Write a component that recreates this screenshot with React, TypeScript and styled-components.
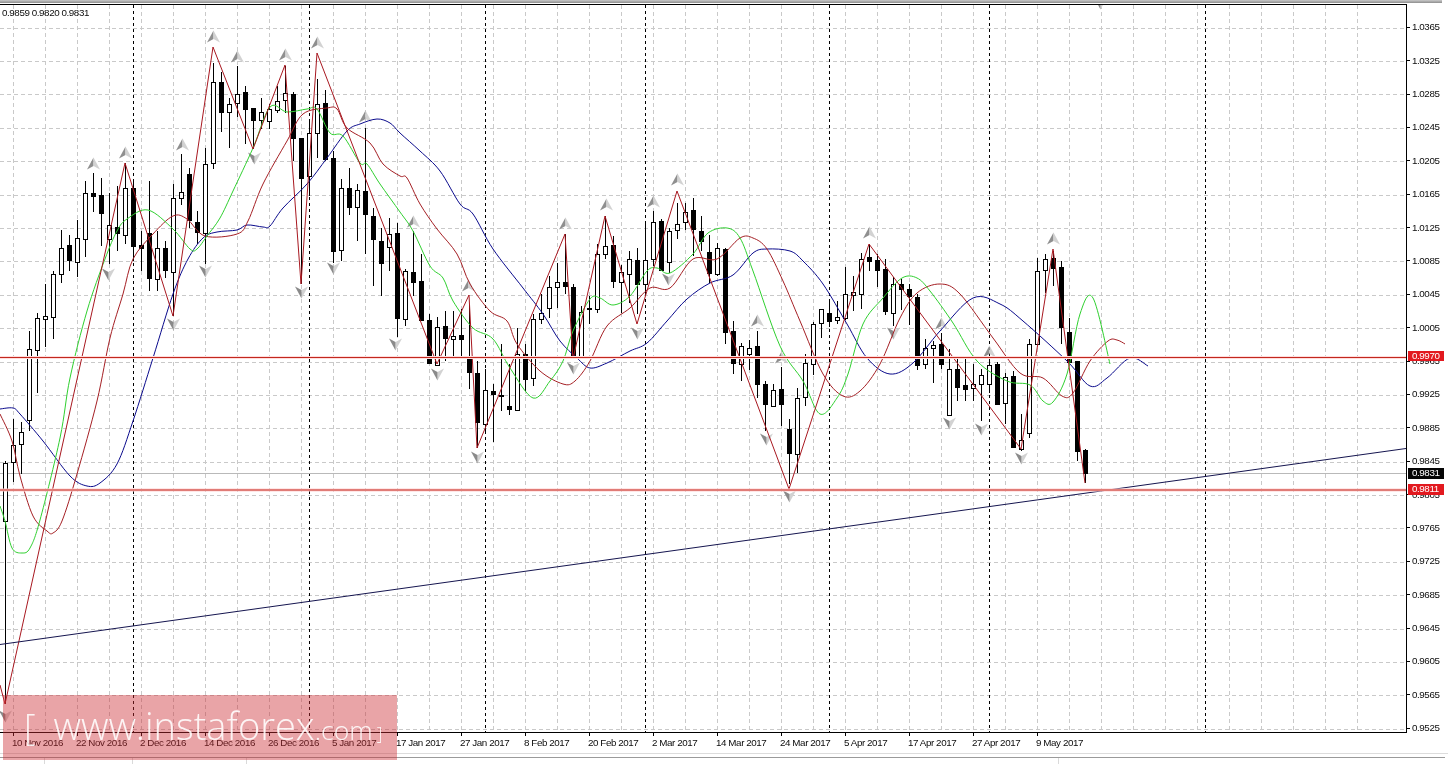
import React from "react";
import styled, { createGlobalStyle } from "styled-components";

const GlobalStyle = createGlobalStyle`
  html, body { margin: 0; padding: 0; background: #fff; overflow: hidden; }
  #root { width: 1448px; height: 764px; }
`;

const FONT = `"Liberation Sans", Arial, sans-serif`;

const Page = styled.div`
  position: relative;
  width: 1448px;
  height: 764px;
  display: flex;
  flex-direction: column;
  background: #fff;
  overflow: hidden;
  font-family: ${FONT};
  font-size: 9.8px;
  letter-spacing: -0.42px;
  color: #0c0c0c;
  filter: blur(0.22px);
`;
const TopBand = styled.div`
  height: 3px;
  margin-right: 6px;
  background: linear-gradient(#c9c9c9, #8e8e8e);
  flex: none;
  margin-bottom: 1px;
`;
const ChartRow = styled.div`
  display: flex;
  height: 729px;
  flex: none;
`;
const ChartArea = styled.div`
  position: relative;
  width: 1406px;
  height: 727px;
  flex: none;
  border-top: 1px solid #000;
  border-right: 1px solid #000;
  border-bottom: 1px solid #000;
`;
const ChartSvg = styled.svg`
  display: block;
  width: 1406px;
  height: 727px;
`;
const Legend = styled.div`
  position: absolute;
  left: 2px;
  top: 2px;
  line-height: 12px;
  white-space: pre;
`;
const PriceAxis = styled.div`
  position: relative;
  flex: 1;
  display: flex;
  flex-direction: column;
  padding-top: 6.1px;
`;
const PriceRow = styled.div`
  position: relative;
  height: 33.38px;
  flex: none;
  display: flex;
  align-items: center;
  padding-left: 5px;
  &::before {
    content: "";
    position: absolute;
    left: 0;
    top: 50%;
    width: 3px;
    height: 1px;
    background: #000;
  }
`;
const PriceTag = styled.div<{ $top: number; $bg: string }>`
  position: absolute;
  left: 1px;
  top: ${(p) => p.$top}px;
  width: 36px;
  height: 10.5px;
  line-height: 10.5px;
  padding-left: 4px;
  box-sizing: border-box;
  background: ${(p) => p.$bg};
  color: #fff;
`;
const DateAxis = styled.div`
  display: flex;
  height: 20px;
  flex: none;
  padding-left: 12px;
`;
const DateCell = styled.div`
  position: relative;
  width: 64px;
  flex: none;
  padding-top: 4px;
  line-height: 12px;
  white-space: nowrap;
  &::before {
    content: "";
    position: absolute;
    left: 1px;
    top: -1px;
    width: 1px;
    height: 4px;
    background: #000;
  }
`;
const Divider = styled.div`
  height: 1px;
  background: #dcdcdc;
  flex: none;
`;
const TabStrip = styled.div`
  margin-top: 3px;
  flex: 1;
  display: flex;
  margin-right: 3px;
  border-top: 1px solid #9a9a9a;
`;
const Tab = styled.div<{ $w: number }>`
  width: ${(p) => p.$w}px;
  flex: none;
  border-right: 1px solid #dadada;
  box-sizing: border-box;
`;
const Watermark = styled.div`
  position: absolute;
  left: 3px;
  top: 695px;
  width: 394px;
  height: 65px;
  background: rgba(205, 45, 50, 0.43);
  color: rgba(255, 255, 255, 0.88);
  font-family: "Open Sans", "Liberation Sans", sans-serif;
  font-weight: 300;
  letter-spacing: 0;
  display: flex;
  align-items: baseline;
  padding: 3px 0 0 21px;
  box-sizing: border-box;
  white-space: nowrap;
`;
const Bracket = styled.span<{ $size: number }>`
  font-size: ${(p) => p.$size}px;
  line-height: 54px;
`;
const Domain = styled.span`
  margin-left: 18px;
  font-size: 38px;
  line-height: 54px;
`;
const Suffix = styled.span`
  font-size: 26.5px;
  line-height: 54px;
  margin-right: 4px;
`;

type C = [number, number, number, number, number];
const CANDLES: C[] = [
  [460,703,462,520,0],[418,481,444,461,0],[421,473,431,443,0],[330,430,348,419,0],[312,392,317,349,0],[283,346,315,318,0],[270,338,273,316,0],[229,282,247,273,0],
  [234,270,244,260,1],[219,276,237,261,0],[180,256,192,238,0],[172,211,192,196,1],[177,245,194,213,1],[192,263,224,238,0],[185,250,226,233,1],[162,243,187,234,0],
  [178,260,187,246,1],[230,270,244,248,1],[180,290,232,278,1],[230,290,247,278,0],[240,277,247,270,1],[183,315,197,271,0],[153,204,191,197,0],[167,227,173,220,1],
  [210,243,221,232,1],[147,263,163,232,0],[62,168,81,162,0],[71,131,81,112,1],[97,147,103,111,0],[65,116,93,102,0],[85,143,91,109,1],[107,148,107,120,1],
  [97,128,111,119,0],[103,128,108,120,0],[85,112,100,109,0],[65,112,92,99,0],[91,160,93,138,1],[137,283,137,178,1],[120,195,132,175,0],[78,157,103,132,0],
  [89,160,102,159,1],[150,262,157,251,1],[178,260,187,249,0],[167,214,187,207,1],[183,240,189,206,0],[127,253,190,214,1],[207,285,215,239,1],[227,295,240,263,1],
  [217,270,233,246,0],[222,336,232,318,1],[268,325,270,318,0],[230,295,271,282,1],[253,320,280,320,1],[313,363,319,363,1],[316,365,326,364,0],[310,360,325,338,1],
  [310,358,335,338,0],[308,357,334,339,1],[303,388,357,372,1],[360,447,372,422,1],[368,433,389,423,0],[383,441,390,394,1],[343,410,394,396,1],[363,414,405,409,1],
  [327,410,353,409,0],[343,390,353,379,1],[313,385,318,377,0],[293,323,312,318,0],[275,317,286,307,0],[262,307,281,286,0],[233,293,281,286,1],[283,358,286,357,1],
  [305,358,311,357,0],[295,323,307,309,1],[243,312,253,308,0],[215,258,245,253,0],[235,287,244,281,1],[264,312,271,281,0],[250,302,258,273,0],[247,313,259,284,1],
  [223,293,259,283,0],[210,265,221,258,0],[218,270,220,270,1],[227,272,230,261,0],[202,238,223,229,0],[202,229,211,221,0],[197,255,209,229,1],[215,250,230,241,1],
  [234,282,251,273,1],[242,275,247,273,0],[247,343,248,332,1],[320,373,330,363,1],[342,380,345,363,0],[339,369,347,353,0],[330,397,345,384,1],[380,430,383,404,1],
  [383,405,389,405,0],[366,425,388,404,1],[418,483,428,453,1],[387,472,397,453,0],[353,405,362,396,0],[321,374,323,363,0],[308,337,308,322,0],[298,326,312,321,1],
  [300,323,316,319,0],[266,319,293,317,0],[275,310,291,294,0],[252,308,258,293,0],[243,270,256,261,1],[253,286,259,270,1],[258,314,268,311,1],[276,325,283,312,0],
  [278,309,283,289,1],[283,324,288,296,1],[293,369,296,365,1],[338,368,347,363,0],[340,382,344,347,0],[332,368,343,364,1],[348,415,368,414,0],[358,400,368,387,1],
  [358,400,384,389,1],[363,400,383,387,0],[368,420,374,383,0],[357,392,364,383,0],[361,404,363,404,1],[372,423,376,402,0],[370,447,375,447,1],[413,450,439,448,0],
  [338,437,343,432,0],[257,343,270,343,0],[253,292,258,269,0],[250,285,257,268,1],[260,343,266,327,1],[317,362,331,362,1],[360,460,360,451,1],[448,482,449,473,1],
];

const pts = (a: number[][]) => a.map((p) => `${p[0]},${p[1]}`).join(" ");

// Catmull-Rom spline through the sampled points of a moving average
const spline = (a: number[][]) => {
  let d = `M${a[0][0]},${a[0][1]}`;
  for (let i = 0; i < a.length - 1; i++) {
    const p0 = a[Math.max(i - 1, 0)];
    const p1 = a[i];
    const p2 = a[i + 1];
    const p3 = a[Math.min(i + 2, a.length - 1)];
    const c1x = p1[0] + (p2[0] - p0[0]) / 6;
    const c1y = p1[1] + (p2[1] - p0[1]) / 6;
    const c2x = p2[0] - (p3[0] - p1[0]) / 6;
    const c2y = p2[1] - (p3[1] - p1[1]) / 6;
    d += ` C${c1x.toFixed(1)},${c1y.toFixed(1)} ${c2x.toFixed(1)},${c2y.toFixed(1)} ${p2[0]},${p2[1]}`;
  }
  return d;
};

const ZIGZAG = [[0,684],[5,703],[125,162],[173,315],[213,46],[253,148],[285,64],[301,283],[317,52],[437,363],[469,294],[477,447],[565,233],[573,358],[605,215],[637,323],[677,190],[789,488],[869,243],[1021,448],[1053,248],[1085,482]];
const RED = [[0,413],[12,440],[20,475],[33,515],[47,530],[53,532],[62,520],[77,473],[97,400],[110,337],[123,293],[133,258],[153,233],[173,215],[187,218],[205,235],[237,233],[248,220],[263,183],[287,140],[303,113],[327,107],[337,108],[347,127],[370,142],[383,163],[400,175],[407,177],[420,203],[437,228],[457,253],[470,283],[490,310],[507,320],[517,343],[540,370],[563,383],[575,380],[590,360],[607,325],[630,307],[650,287],[670,287],[693,258],[717,258],[740,237],[753,237],[767,248],[783,280],[800,320],[823,373],[843,395],[860,390],[880,363],[900,317],[917,292],[940,283],[960,293],[993,337],[1020,372],[1043,377],[1062,395],[1073,392],[1090,360],[1108,340],[1117,339],[1125,343]];
const GREEN = [[0,505],[5,520],[12,547],[22,552],[30,547],[40,519],[60,437],[70,377],[87,310],[105,258],[117,230],[127,218],[148,209],[173,228],[190,248],[197,248],[207,235],[220,217],[233,190],[253,147],[270,106],[287,111],[307,108],[317,108],[330,132],[343,135],[360,162],[367,163],[380,183],[400,211],[413,230],[430,265],[443,277],[453,300],[473,327],[493,338],[510,367],[533,397],[550,380],[563,360],[573,330],[590,298],[600,297],[613,304],[630,295],[647,270],[657,267],[670,272],[693,253],[708,232],[727,227],[740,237],[753,270],[780,345],[803,380],[820,413],[837,397],[848,373],[863,323],[883,297],[902,277],[917,277],[930,290],[953,322],[977,360],[1007,380],[1030,384],[1043,400],[1053,401],[1067,373],[1080,313],[1093,297],[1110,363]];
const BLUE = [[0,408],[13,407],[20,413],[43,440],[70,475],[87,485],[100,482],[117,463],[133,420],[153,357],[173,293],[188,258],[203,237],[217,231],[237,229],[247,224],[263,226],[270,225],[283,207],[307,183],[327,157],[347,130],[360,123],[377,118],[390,122],[400,132],[420,150],[440,170],[460,203],[473,213],[493,248],[523,287],[543,313],[560,340],[577,357],[590,367],[607,362],[630,350],[647,342],[667,320],[687,298],[710,282],[733,274],[753,252],[767,248],[790,250],[803,260],[823,283],[847,323],[867,357],[890,373],[913,362],[940,330],[973,297],[1000,303],[1023,320],[1067,360],[1090,385],[1107,377],[1130,357],[1148,365]];

const UP = [[93,163],[125,152],[182,144],[213,36],[237,56],[285,54],[317,42],[365,116],[413,221],[468,285],[565,223],[606,204],[653,201],[677,179],[757,320],[781,357],[869,232],[941,323],[989,351],[1053,238]];
const DOWN = [[5,715],[108,273],[173,323],[205,270],[254,157],[301,291],[333,267],[395,343],[437,373],[477,456],[573,367],[637,332],[668,278],[766,438],[789,495],[893,332],[949,422],[981,428],[1021,457],[1100,2]];

const PRICES = ["1.0365","1.0325","1.0285","1.0245","1.0205","1.0165","1.0125","1.0085","1.0045","1.0005","0.9965","0.9925","0.9885","0.9845","0.9805","0.9765","0.9725","0.9685","0.9645","0.9605","0.9565","0.9525"];
const DATES = ["10 Nov 2016","22 Nov 2016","2 Dec 2016","14 Dec 2016","26 Dec 2016","5 Jan 2017","17 Jan 2017","27 Jan 2017","8 Feb 2017","20 Feb 2017","2 Mar 2017","14 Mar 2017","24 Mar 2017","5 Apr 2017","17 Apr 2017","27 Apr 2017","9 May 2017"];
const PERIODS = [133, 309, 485, 645, 829, 989, 1205];

const Marker = ({ x, y, down }: { x: number; y: number; down?: boolean }) => (
  <g transform={`translate(${x + 0.5} ${y}) ${down ? "rotate(180)" : ""}`}>
    <polygon points="0,-6.5 -6.5,5.5 0,2" fill={down ? "#d2d2d2" : "#8f8f8f"} />
    <polygon points="0,-6.5 6.5,5.5 0,2" fill={down ? "#8a8a8a" : "#d2d2d2"} />
  </g>
);

const Chart = () => {
  const vGrid = Array.from({ length: 43 }, (_, i) => 13.5 + 32 * i);
  const hGrid = PRICES.map((_, i) => Math.round(26.7 + 33.38 * i) + 0.5);
  return (
    <ChartSvg viewBox="0 4 1406 727">
      <g stroke="#c9c9c9" strokeWidth="1" strokeDasharray="4 3" fill="none">
        {vGrid.map((x) => <line key={x} x1={x} x2={x} y1={4} y2={732} />)}
        {hGrid.map((y) => <line key={y} x1={0} x2={1406} y1={y} y2={y} />)}
      </g>
      <g stroke="#000" strokeWidth="1" strokeDasharray="3 3">
        {PERIODS.map((x) => <line key={x} x1={x + 0.5} x2={x + 0.5} y1={4} y2={732} />)}
      </g>
      <line x1={0} x2={1406} y1={472.5} y2={472.5} stroke="#b9b9b9" />
      {UP.map(([x, y]) => <Marker key={`u${x}`} x={x} y={y} />)}
      {DOWN.map(([x, y]) => <Marker key={`d${x}`} x={x} y={y} down />)}
      {CANDLES.map(([hi, lo, top, bot, black], k) => {
        const x = 5 + 8 * k;
        return (
          <g key={k}>
            <line x1={x + 0.5} x2={x + 0.5} y1={hi} y2={lo} stroke="#000" />
            {black ? (
              <rect x={x - 2} y={top} width={5} height={Math.max(bot - top, 2)} fill="#000" />
            ) : (
              <rect x={x - 1.5} y={top + 0.5} width={4} height={Math.max(bot - top, 2)} fill="#fff" stroke="#000" />
            )}
          </g>
        );
      })}
      <path d={spline(BLUE)} fill="none" stroke="#0a0a8c" strokeWidth="1" />
      <path d={spline(RED)} fill="none" stroke="#a51f24" strokeWidth="1" />
      <path d={spline(GREEN)} fill="none" stroke="#2fd02f" strokeWidth="1" />
      <polyline points={pts(ZIGZAG)} fill="none" stroke="#a81820" strokeWidth="1" strokeLinejoin="miter" />
      <line x1={0} x2={1406} y1={643.5} y2={447.5} stroke="#15154f" strokeWidth="1" />
      <line x1={0} x2={1406} y1={489} y2={489} stroke="#ffd0d0" strokeWidth="3" />
      <line x1={0} x2={1406} y1={356.5} y2={356.5} stroke="#ffdcdc" strokeWidth="3" />
      <line x1={0} x2={1406} y1={356.5} y2={356.5} stroke="#c2281e" />
      <line x1={0} x2={1406} y1={489} y2={489} stroke="#c2281e" />
    </ChartSvg>
  );
};

export default function App() {
  return (
    <Page>
      <GlobalStyle />
      <TopBand />
      <ChartRow>
        <ChartArea>
          <Chart />
          <Legend>0.9859 0.9820 0.9831</Legend>
        </ChartArea>
        <PriceAxis>
          {PRICES.map((p) => <PriceRow key={p}>{p}</PriceRow>)}
          <PriceTag $top={346.5} $bg="#e2191f">0.9970</PriceTag>
          <PriceTag $top={464} $bg="#050505">0.9831</PriceTag>
          <PriceTag $top={480} $bg="#e2191f">0.9811</PriceTag>
        </PriceAxis>
      </ChartRow>
      <DateAxis>
        {DATES.map((d) => <DateCell key={d}>{d}</DateCell>)}
      </DateAxis>
      <Divider />
      <TabStrip>
        <Tab $w={45} />
        <Tab $w={88} />
        <Tab $w={114} />
        <Tab $w={812} />
      </TabStrip>
      <Watermark>
        <Bracket $size={36}>[</Bracket>
        <Domain>www.instaforex</Domain>
        <Suffix>.com</Suffix>
        <Bracket $size={18}>]</Bracket>
      </Watermark>
    </Page>
  );
}
